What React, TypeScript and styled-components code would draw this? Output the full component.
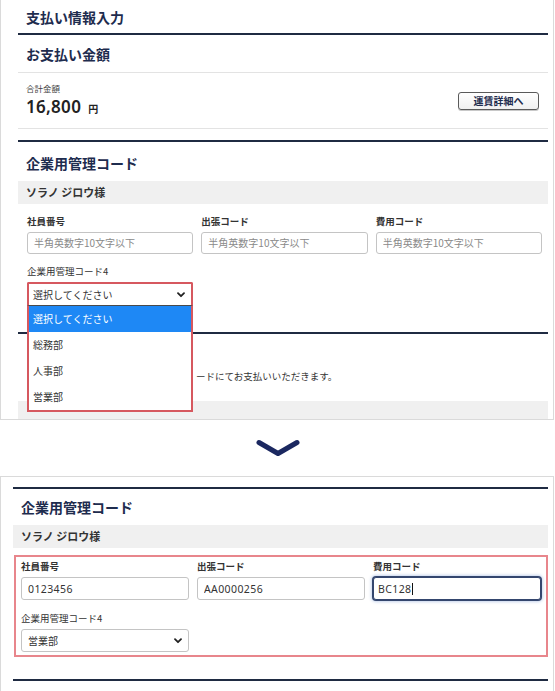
import React from "react";
import styled, { createGlobalStyle } from "styled-components";

const Global = createGlobalStyle`
  html, body { margin: 0; padding: 0; overflow: hidden; background: #fff; }
  body {
    width: 555px; height: 691px;
    font-family: "Noto Sans CJK JP", "Noto Sans", sans-serif;
    color: #333;
  }
  * { box-sizing: border-box; }
`;

const NAVY = "#1e2c4e";
const LINE = "#1f2b42";

const Page = styled.div`
  width: 555px;
  display: flex;
  flex-direction: column;
`;

const Panel = styled.section<{ $pl: number; $h: number; $top?: boolean }>`
  flex: none;
  width: 554px;
  height: ${(p) => p.$h}px;
  border: 1px solid #dadada;
  border-top: ${(p) => (p.$top ? "1px solid #dadada" : "none")};
  padding: 0 5px 0 ${(p) => p.$pl}px;
  overflow: hidden;
  display: block;
`;

const PageTitle = styled.h1`
  margin: 0;
  height: 35px;
  padding-left: 8px;
  border-bottom: 2px solid ${LINE};
  display: flex;
  align-items: center;
  font-size: 14px;
  font-weight: 700;
  color: ${NAVY};
`;

const Section = styled.div<{ $mt: number; $h?: number }>`
  margin-top: ${(p) => p.$mt}px;
  ${(p) => (p.$h ? `height: ${p.$h}px;` : "")}
  border-top: 2px solid ${LINE};
  display: flex;
  flex-direction: column;
`;

const SectionHead = styled.h2<{ $h: number; $rule?: boolean; $pt?: number }>`
  margin: 0;
  flex: none;
  height: ${(p) => p.$h}px;
  padding: ${(p) => p.$pt ?? 0}px 0 0 8px;
  display: flex;
  align-items: center;
  font-size: 14px;
  font-weight: 700;
  color: ${NAVY};
  border-bottom: ${(p) => (p.$rule ? "1px solid #e3e3e3" : "none")};
`;

const AmountRow = styled.div`
  height: 56px;
  border-bottom: 1px solid #e3e3e3;
  padding: 0 9px 0 8px;
  display: flex;
  align-items: center;
  justify-content: space-between;
`;

const AmountCol = styled.div`
  display: flex;
  flex-direction: column;
`;

const SmallLabel = styled.div`
  font-size: 8.5px;
  line-height: 14px;
  color: #444;
`;

const Amount = styled.div`
  line-height: 24px;
  display: flex;
  align-items: baseline;
  color: #222;
`;

const AmountNum = styled.span`
  font-family: "Noto Sans", sans-serif;
  font-size: 17px;
  font-weight: 600;
  letter-spacing: 0.3px;
`;

const Yen = styled.span`
  margin-left: 7px;
  font-size: 10px;
  font-weight: 700;
`;

const DetailButton = styled.button`
  width: 81px;
  height: 18px;
  padding: 0;
  border: 1px solid #5a5a5a;
  border-radius: 3px;
  background: linear-gradient(#ffffff, #f0f0f0);
  box-shadow: 0 1px 0 #c8c8c8;
  font-family: "Noto Sans CJK JP", sans-serif;
  font-size: 10px;
  font-weight: 700;
  color: ${NAVY};
  line-height: 16px;
`;

const NameBar = styled.div`
  flex: none;
  height: 23px;
  line-height: 23px;
  padding-left: 8px;
  background: #f0f0f0;
  font-size: 11px;
  font-weight: 700;
  color: #333;
`;

const Form = styled.div<{ $p: string }>`
  padding: ${(p) => p.$p};
`;

const Annotated = styled.div`
  margin: 7px 0 0 1px;
  border: 2px solid #e8868c;
  padding: 2px 5px 3px 5px;
`;

const Grid = styled.div<{ $rowGap: number }>`
  display: grid;
  grid-template-columns: repeat(3, 1fr);
  column-gap: 8px;
  row-gap: ${(p) => p.$rowGap}px;
`;

const Field = styled.div`
  display: flex;
  flex-direction: column;
`;

const FieldLabel = styled.label<{ $bold?: boolean }>`
  font-size: 9.5px;
  line-height: 14px;
  margin-bottom: 4px;
  font-weight: ${(p) => (p.$bold ? 700 : 400)};
  color: #333;
`;

const inputBase = `
  width: 100%;
  padding: 0 6px;
  border-radius: 3px;
  background: #fff;
  outline: none;
  font-family: "Noto Sans", "Noto Sans CJK JP", sans-serif;
  font-size: 10.5px;
  letter-spacing: 0.4px;
  color: #333;
`;

const TextInput = styled.input<{ $h: number }>`
  ${inputBase}
  height: ${(p) => p.$h}px;
  border: 1px solid #c4c4c4;
  &::placeholder {
    font-family: "Noto Sans CJK JP", sans-serif;
    font-size: 10px;
    letter-spacing: 0;
    color: #8a8a8a;
  }
`;

const FocusedInput = styled.div<{ $h: number }>`
  ${inputBase}
  height: ${(p) => p.$h}px;
  padding-left: 4px;
  border: 1px solid #34466e;
  box-shadow: 0 0 0 1px #34466e, 0 0 3px 2px rgba(90, 130, 200, 0.35);
  display: flex;
  align-items: center;
`;

const Caret = styled.span`
  display: inline-block;
  width: 1px;
  height: 12px;
  margin-left: 1px;
  background: #111;
`;

const SelectWrap = styled.div`
  position: relative;
`;

const SelectBox = styled.div<{ $h: number; $open?: boolean }>`
  height: ${(p) => p.$h}px;
  display: flex;
  align-items: center;
  justify-content: space-between;
  padding: 0 6px 0 ${(p) => (p.$open ? 4 : 6)}px;
  border: ${(p) => (p.$open ? "2px solid #d6585f" : "1px solid #c4c4c4")};
  border-bottom: ${(p) => (p.$open ? "1px solid #4a4a4a" : "1px solid #c4c4c4")};
  border-radius: ${(p) => (p.$open ? "2px 2px 0 0" : "3px")};
  background: #fff;
  font-size: 10px;
  color: #333;
`;

const Options = styled.ul`
  position: absolute;
  top: 100%;
  left: 0;
  right: 0;
  margin: 0;
  padding: 0;
  list-style: none;
  background: #fff;
  border: 2px solid #d6585f;
  border-top: none;
  z-index: 5;
`;

const Option = styled.li<{ $active?: boolean }>`
  height: 26px;
  line-height: 26px;
  padding-left: 4px;
  font-size: 10px;
  color: ${(p) => (p.$active ? "#fff" : "#333")};
  background: ${(p) => (p.$active ? "#1e88f5" : "transparent")};
`;

const Para = styled.p`
  margin: 30px 0 0;
  padding-left: 178px;
  line-height: 24px;
  font-size: 9.5px;
  color: #333;
  white-space: nowrap;
`;

const GrayBlock = styled.div<{ $mt: number }>`
  flex: none;
  margin-top: ${(p) => p.$mt}px;
  height: 30px;
  background: #f0f0f0;
`;

const ArrowZone = styled.div`
  flex: none;
  height: 56px;
  display: flex;
  align-items: center;
  justify-content: center;
`;

const Chevron = () => (
  <svg width="44" height="18" viewBox="0 0 44 18">
    <polyline
      points="3,3.5 22,14.5 41,3.5"
      fill="none"
      stroke="#1b2860"
      strokeWidth="5"
      strokeLinecap="round"
      strokeLinejoin="round"
    />
  </svg>
);

const SelectArrow = () => (
  <svg width="8" height="6" viewBox="0 0 8 6">
    <polyline
      points="1,1.2 4,4.2 7,1.2"
      fill="none"
      stroke="#222"
      strokeWidth="1.8"
      strokeLinecap="round"
      strokeLinejoin="round"
    />
  </svg>
);

const PH = "半角英数字10文字以下";

export default function App() {
  return (
    <>
      <Global />
      <Page>
        <Panel $pl={17} $h={420}>
          <PageTitle>支払い情報入力</PageTitle>
          <SectionHead $h={38} $rule>
            お支払い金額
          </SectionHead>
          <AmountRow>
            <AmountCol>
              <SmallLabel>合計金額</SmallLabel>
              <Amount>
                <AmountNum>16,800</AmountNum>
                <Yen>円</Yen>
              </Amount>
            </AmountCol>
            <DetailButton>運賃詳細へ</DetailButton>
          </AmountRow>

          <Section $mt={11}>
            <SectionHead $h={39} $pt={2}>
              企業用管理コード
            </SectionHead>
            <NameBar>ソラノ ジロウ様</NameBar>
            <Form $p="10px 6px 14px 9px">
              <Grid $rowGap={10}>
                <Field>
                  <FieldLabel $bold>社員番号</FieldLabel>
                  <TextInput $h={22} placeholder={PH} readOnly />
                </Field>
                <Field>
                  <FieldLabel $bold>出張コード</FieldLabel>
                  <TextInput $h={22} placeholder={PH} readOnly />
                </Field>
                <Field>
                  <FieldLabel $bold>費用コード</FieldLabel>
                  <TextInput $h={22} placeholder={PH} readOnly />
                </Field>
                <Field>
                  <FieldLabel>企業用管理コード4</FieldLabel>
                  <SelectWrap>
                    <SelectBox $h={24} $open>
                      <span>選択してください</span>
                      <SelectArrow />
                    </SelectBox>
                    <Options>
                      <Option $active>選択してください</Option>
                      <Option>総務部</Option>
                      <Option>人事部</Option>
                      <Option>営業部</Option>
                    </Options>
                  </SelectWrap>
                </Field>
              </Grid>
            </Form>
          </Section>

          <Section $mt={12}>
            <Para>ードにてお支払いいただきます。</Para>
            <GrayBlock $mt={13} />
          </Section>
        </Panel>

        <ArrowZone>
          <Chevron />
        </ArrowZone>

        <Panel $pl={12} $h={240} $top>
          <Section $mt={10}>
            <SectionHead $h={36}>企業用管理コード</SectionHead>
            <NameBar>ソラノ ジロウ様</NameBar>
            <Annotated>
              <Grid $rowGap={11}>
                <Field>
                  <FieldLabel $bold>社員番号</FieldLabel>
                  <TextInput $h={23} value="0123456" readOnly />
                </Field>
                <Field>
                  <FieldLabel $bold>出張コード</FieldLabel>
                  <TextInput $h={23} value="AA0000256" readOnly />
                </Field>
                <Field>
                  <FieldLabel $bold>費用コード</FieldLabel>
                  <FocusedInput $h={23}>
                    <span>BC128</span>
                    <Caret />
                  </FocusedInput>
                </Field>
                <Field>
                  <FieldLabel>企業用管理コード4</FieldLabel>
                  <SelectBox $h={23}>
                    <span>営業部</span>
                    <SelectArrow />
                  </SelectBox>
                </Field>
              </Grid>
            </Annotated>
          </Section>
          <Section $mt={22} $h={40} />
        </Panel>
      </Page>
    </>
  );
}
